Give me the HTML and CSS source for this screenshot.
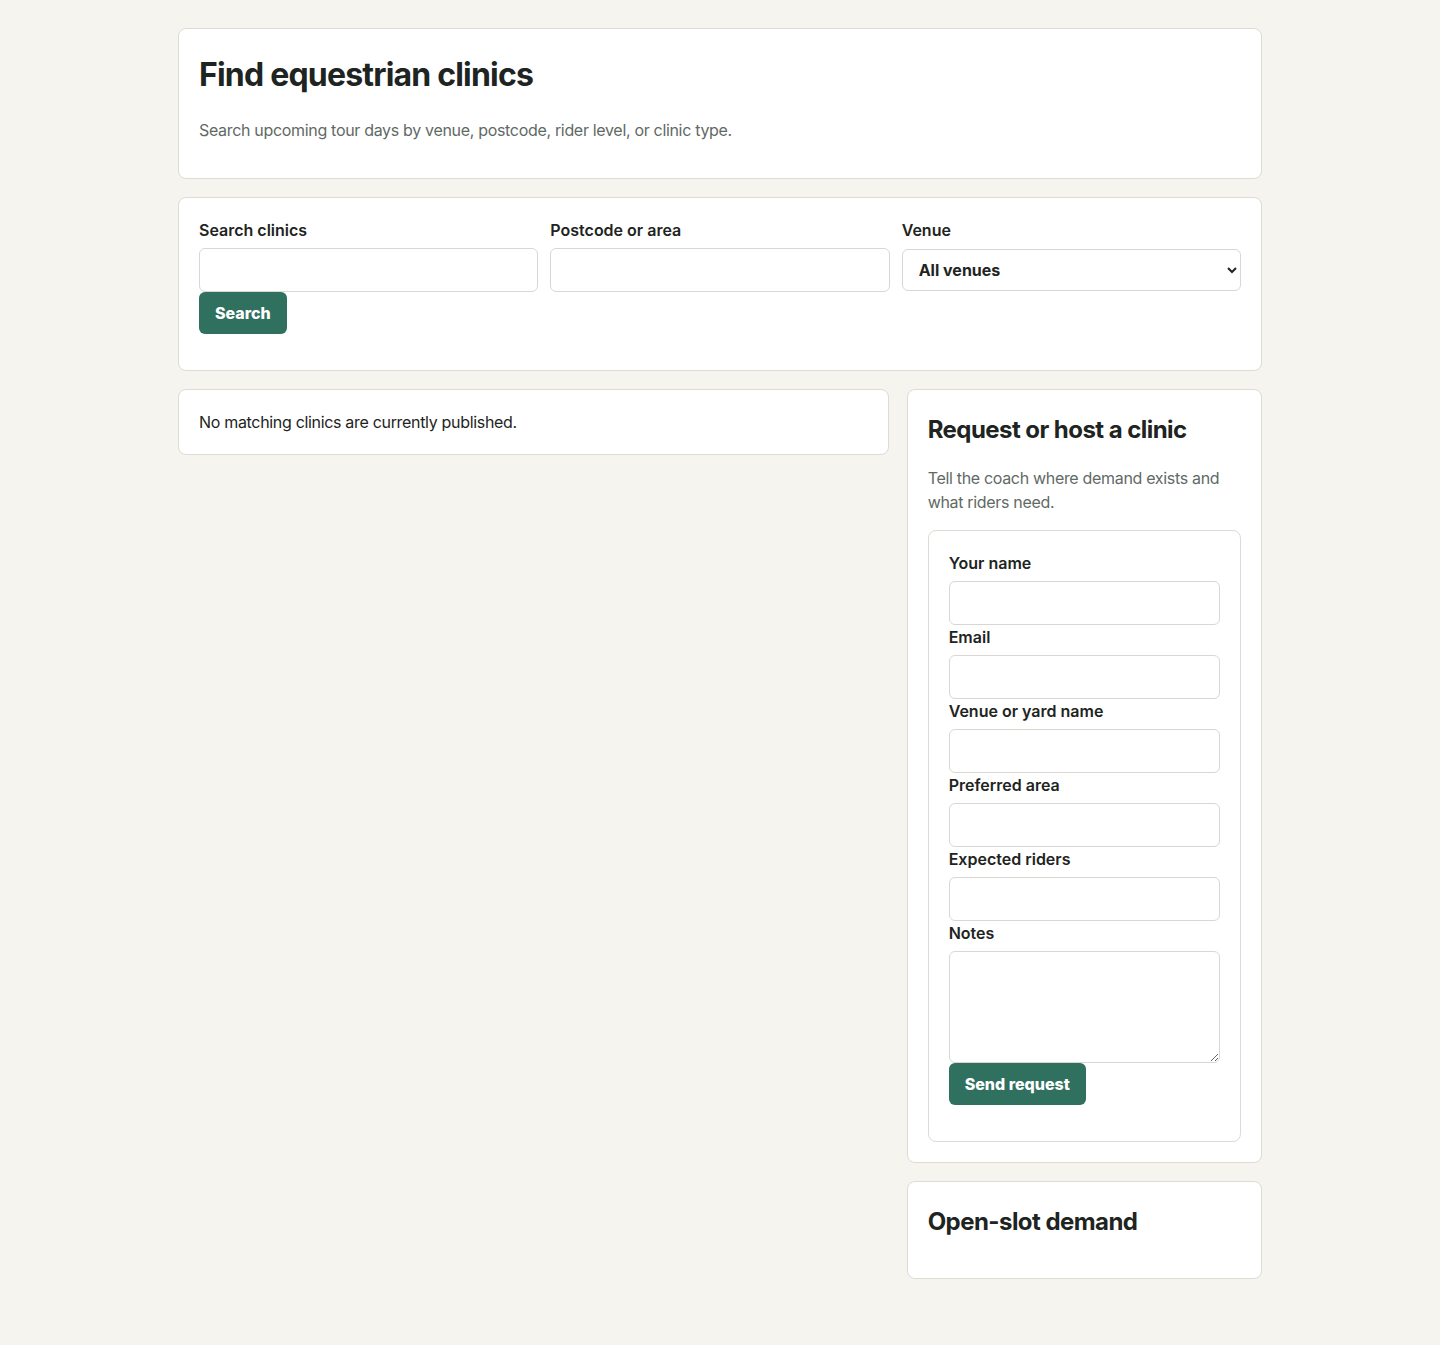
FILE: index.html
```html
<!DOCTYPE html>
<html lang="en">
<head>
<meta charset="utf-8">
<title>Find equestrian clinics</title>
<link rel="stylesheet" href="styles.css">
</head>
<body>
<main class="page">
  <section class="card">
    <h1>Find equestrian clinics</h1>
    <p class="muted">Search upcoming tour days by venue, postcode, rider level, or clinic type.</p>
  </section>

  <section class="card">
    <form class="search-form">
      <div class="search-grid">
        <label class="field">Search clinics
          <input type="text" class="control">
        </label>
        <label class="field">Postcode or area
          <input type="text" class="control">
        </label>
        <label class="field">Venue
          <select class="control select">
            <option>All venues</option>
          </select>
        </label>
      </div>
      <button type="button" class="btn">Search</button>
    </form>
  </section>

  <div class="layout">
    <section class="card empty">No matching clinics are currently published.</section>
    <aside class="side">
      <section class="card">
        <h2>Request or host a clinic</h2>
        <p class="muted">Tell the coach where demand exists and what riders need.</p>
        <form class="request-form">
          <label class="field">Your name
            <input type="text" class="control">
          </label>
          <label class="field">Email
            <input type="email" class="control">
          </label>
          <label class="field">Venue or yard name
            <input type="text" class="control">
          </label>
          <label class="field">Preferred area
            <input type="text" class="control">
          </label>
          <label class="field">Expected riders
            <input type="text" class="control">
          </label>
          <label class="field">Notes
            <textarea class="control textarea"></textarea>
          </label>
          <button type="button" class="btn">Send request</button>
        </form>
      </section>
      <section class="card">
        <h2>Open-slot demand</h2>
      </section>
    </aside>
  </div>
</main>
</body>
</html>
```

FILE: styles.css
```css
* { box-sizing: border-box; }

html, body {
  margin: 0;
  padding: 0;
}

body {
  background: #f5f4ef;
  color: #1e2421;
  font-family: Inter, "Noto Sans", "Liberation Sans", sans-serif;
  font-size: 16px;
  line-height: 1.5;
  letter-spacing: -0.32px;
}

.page {
  max-width: 1084px;
  margin: 0 auto;
  padding: 28px 0 66px;
  display: flex;
  flex-direction: column;
  gap: 18px;
}

.card {
  background: #ffffff;
  border: 1px solid #dcdcd4;
  border-radius: 8px;
  padding: 20px;
}

h1 {
  font-size: 32px;
  font-weight: 700;
  line-height: 1.5;
  margin: 2px 0 19px;
  letter-spacing: -0.8px;
}

h2 {
  font-size: 24px;
  font-weight: 700;
  line-height: 1.5;
  margin: 2px 0 18px;
  letter-spacing: -0.55px;
}

p { margin: 0 0 16px; }

.muted { color: #5f6a65; }

.field {
  display: block;
  font-weight: 600;
  letter-spacing: 0;
}

.control {
  display: block;
  width: 100%;
  height: 44px;
  margin-top: 6px;
  padding: 0 12px;
  border: 1px solid #d8d8d0;
  border-radius: 6px;
  background: #ffffff;
  font: inherit;
  color: inherit;
}

.select {
  height: 42px;
  margin-top: 7px;
  padding: 0 12px;
  font-weight: 650;
}

.textarea {
  height: 112px;
  padding: 10px 12px;
  resize: vertical;
}

.search-grid {
  display: grid;
  grid-template-columns: repeat(3, 1fr);
  gap: 12px;
  align-items: start;
}

.btn {
  display: inline-block;
  height: 42px;
  padding: 0 16px;
  margin: 0 0 16px;
  border: 0;
  border-radius: 6px;
  background: #2f705e;
  color: #ffffff;
  font-family: inherit;
  font-size: 16px;
  font-weight: 800;
  line-height: 24px;
  letter-spacing: 0;
  cursor: pointer;
  vertical-align: top;
}

.search-form .btn { display: block; }

.layout {
  display: grid;
  grid-template-columns: 2fr 1fr;
  gap: 18px;
  align-items: start;
}

.empty {
  padding: 20px;
}

.side {
  display: flex;
  flex-direction: column;
  gap: 18px;
}

.request-form {
  border: 1px solid #dcdcd4;
  border-radius: 8px;
  padding: 20px;
}

.request-form .btn { display: block; }
```
